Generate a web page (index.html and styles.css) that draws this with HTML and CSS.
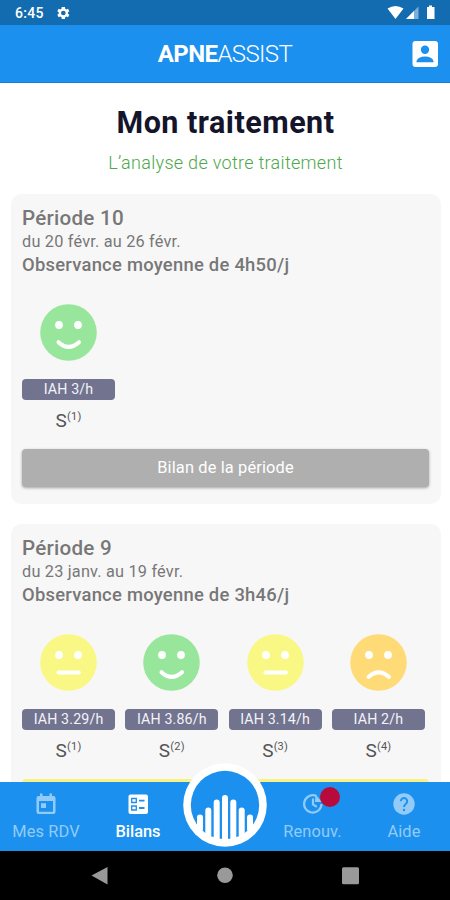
FILE: index.html
```html
<!DOCTYPE html>
<html lang="fr">
<head>
<meta charset="utf-8">
<title>ApneAssist</title>
<link rel="stylesheet" href="styles.css">
</head>
<body>
<svg class="defs" width="0" height="0">
  <symbol id="happy" viewBox="0 0 57 57"><circle cx="28.5" cy="28.5" r="28.3"/><g class="face"><circle cx="19" cy="21" r="3.9"/><circle cx="38" cy="21" r="3.9"/><path d="M18.5 38.2Q28.5 47.5 39 38.2"/></g></symbol>
  <symbol id="neutral" viewBox="0 0 57 57"><circle cx="28.5" cy="28.5" r="28.3"/><g class="face"><circle cx="19" cy="21" r="3.9"/><circle cx="38" cy="21" r="3.9"/><path d="M18.5 38.5H38.8"/></g></symbol>
  <symbol id="sad" viewBox="0 0 57 57"><circle cx="28.5" cy="28.5" r="28.3"/><g class="face"><circle cx="19" cy="21" r="3.9"/><circle cx="38" cy="21" r="3.9"/><path d="M18.5 43Q28.5 33.8 39 43"/></g></symbol>
</svg>
<div class="app">
  <div class="status">
    <span class="time">6:45</span>
    <svg class="gear" width="16" height="16" viewBox="0 0 24 24"><path fill="#fff" fill-rule="evenodd" d="M19.4 13c.1-.7.1-1.300 0-2l2.100-1.700-2-3.500-2.500 1c-.5-.4-1.100-.7-1.700-1L14.900 3h-4.800l-.4 2.800c-.6.300-1.200.6-1.700 1l-2.500-1-2 3.500L5.600 11c-.1.700-.1 1.300 0 2l-2.100 1.700 2 3.500 2.500-1c.5.400 1.100.7 1.700 1l.4 2.800h4.800l.4-2.800c.6-.3 1.200-.6 1.700-1l2.500 1 2-3.500zM12.500 15.500a3.500 3.500 0 1 1 0-7 3.500 3.500 0 0 1 0 7z"/></svg>
    <svg class="signals" width="50" height="16" viewBox="0 0 50 16"><path d="M0.500 3.500Q8.500-1.500 16.500 3.500L8.500 14z" fill="#fff"/><path d="M31.500 1.500V14H19z" fill="#7eb1d9"/><path d="M27 6V14H19z" fill="#fff"/><path d="M40 2H42V0.500H45V2H47.500V14H40z" fill="#fff"/></svg>
  </div>
  <header class="header">
    <div class="brand"><b>APNE</b>ASSIST</div>
    <svg class="account" width="26" height="26" viewBox="0 0 26 26"><rect x=".5" width="25.500" height="26" rx="3" fill="#fff"/><circle cx="13" cy="8.800" r="4.200" fill="#1b90ee"/><path d="M4.500 21.300V20Q6 15.500 13 15.500T21.500 20V21.300z" fill="#1b90ee"/></svg>
  </header>
  <main class="content">
    <h1>Mon traitement</h1>
    <p class="subtitle">L’analyse de votre traitement</p>
    <section class="card">
      <h2>Période 10</h2>
      <p class="dates">du 20 févr. au 26 févr.</p>
      <p class="usage">Observance moyenne de 4h50/j</p>
      <div class="weeks">
        <div class="week"><svg class="smiley green"><use href="#happy"/></svg><span class="pill">IAH 3/h</span><span class="label">S<sup>(1)</sup></span></div>
      </div>
      <div class="button grey">Bilan de la période</div>
    </section>
    <section class="card">
      <h2>Période 9</h2>
      <p class="dates">du 23 janv. au 19 févr.</p>
      <p class="usage">Observance moyenne de 3h46/j</p>
      <div class="weeks">
        <div class="week"><svg class="smiley yellow"><use href="#neutral"/></svg><span class="pill">IAH 3.29/h</span><span class="label">S<sup>(1)</sup></span></div>
        <div class="week"><svg class="smiley green"><use href="#happy"/></svg><span class="pill">IAH 3.86/h</span><span class="label">S<sup>(2)</sup></span></div>
        <div class="week"><svg class="smiley yellow"><use href="#neutral"/></svg><span class="pill">IAH 3.14/h</span><span class="label">S<sup>(3)</sup></span></div>
        <div class="week"><svg class="smiley orange"><use href="#sad"/></svg><span class="pill">IAH 2/h</span><span class="label">S<sup>(4)</sup></span></div>
      </div>
      <div class="button lemon"></div>
    </section>
  </main>
  <nav class="tabs">
    <div class="tab"><svg width="24" height="24" viewBox="0 0 24 24"><path fill="#93cbf8" fill-rule="evenodd" d="M6 1.500h2.500V4h7V1.500H18V4h1.500a2 2 0 0 1 2 2v14a2 2 0 0 1-2 2h-15a2 2 0 0 1-2-2V6a2 2 0 0 1 2-2H6zM5 9v10.700h14V9zM7 11.200h5V16H7z"/></svg><span>Mes RDV</span></div>
    <div class="tab active"><svg width="24" height="24" viewBox="0 0 24 24"><rect x="2.500" y="2.500" width="19.500" height="19.500" rx="2" fill="#fff"/><g fill="none" stroke="#1b90ee" stroke-width="1.300"><path d="M5.700 6.500h4.600v4H5.700zM5.700 14h4.600v4H5.700z"/><path stroke-width="1.800" d="M13 8.600h5.500M13 16h5.500"/></g></svg><span>Bilans</span></div>
    <div class="tab gap"></div>
    <div class="tab"><svg width="24" height="24" viewBox="0 0 24 24"><g fill="none" stroke="#93cbf8" stroke-width="2.200"><path d="M15.500 4A8.700 8.700 0 1 0 20.500 12"/><path d="M12 6.500V12.300L15.800 14.800"/></g><path fill="#93cbf8" d="M14.500 2.500L21 10H14z"/></svg><i class="badge"></i><span>Renouv.</span></div>
    <div class="tab"><svg width="24" height="24" viewBox="0 0 24 24"><circle cx="12" cy="12" r="10.700" fill="#93cbf8"/><path d="M8.800 9.200a3.200 3.200 0 1 1 5.200 2.500Q12 13.300 12 15" fill="none" stroke="#1b90ee" stroke-width="1.900"/><circle cx="12" cy="18" r="1.200" fill="#1b90ee"/></svg><span>Aide</span></div>
    <svg class="logo" width="84" height="84" viewBox="0 0 84 84"><circle cx="42" cy="42" r="41.800" fill="#fff"/><circle cx="42" cy="42" r="34.200" fill="#1b90ee"/><g stroke="#fff" stroke-width="6" stroke-linecap="round"><path d="M17 54.500V66M25.300 47.500V72M33.700 39.500V76M42 35V77M50.300 39.500V76M58.700 47.500V72M67 54.500V66"/></g></svg>
  </nav>
  <div class="system">
    <svg width="450" height="49" viewBox="0 0 450 49"><g fill="#999"><path d="M91.500 24.500L107.500 16V33.500z"/><circle cx="225" cy="24.300" r="7.800"/><rect x="342" y="16.300" width="17" height="17" rx="1.500"/></g></svg>
  </div>
</div>
</body>
</html>
```
FILE: styles.css
```css
* { box-sizing: border-box; }
body { margin: 0; font-family: Roboto, sans-serif; background: #fff; }
h1, h2, p { margin: 0; }
.defs { position: absolute; }
.app { width: 450px; height: 900px; display: flex; flex-direction: column; overflow: hidden; }
.status { height: 25px; flex: none; background: #146cb0; color: #fff; display: flex; align-items: center; padding: 1px 13px 0 15px; }
.time { font-size: 14px; font-weight: 500; letter-spacing: .3px; width: 40px; }
.signals { margin-left: auto; }
.header { height: 58px; flex: none; background: #1b90ee; border-bottom: 1px solid #1581da; display: flex; align-items: center; justify-content: center; padding-right: 12px; }
.brand { flex: 1; text-align: center; padding-left: 38px; color: #fff; font-size: 24px; font-weight: 300; letter-spacing: -.6px; }
.brand b { font-weight: 700; }
.content { flex: 1; min-height: 0; overflow: hidden; padding: 22px 9.500px 0 10.500px; }
h1 { text-align: center; font-size: 30.500px; line-height: 36px; font-weight: 700; color: #14142b; letter-spacing: .5px; }
.subtitle { text-align: center; font-size: 18px; line-height: 24px; font-weight: 300; color: #4ba84b; margin: 10px 0 19px; letter-spacing: .3px; }
.card { height: 310px; background: #f7f7f7; border-radius: 10px; margin-bottom: 20px; padding: 12px 11.500px 0; color: #777; }
h2 { font-size: 20.600px; line-height: 24px; font-weight: 500; letter-spacing: .25px; }
.dates { font-size: 16.300px; line-height: 23px; letter-spacing: .2px; }
.usage { font-size: 18.400px; line-height: 24px; font-weight: 500; letter-spacing: .25px; }
.weeks { display: grid; grid-template-columns: repeat(4, 93px); gap: 10.300px; margin-top: 27px; }
.week { display: flex; flex-direction: column; align-items: center; }
.smiley { width: 57px; height: 57px; }
.face { fill: #fff; }
.face path { fill: none; stroke: #fff; stroke-width: 4; stroke-linecap: round; }
.green { fill: #98e69b; }
.yellow { fill: #faf884; }
.orange { fill: #ffdb78; }
.pill { width: 93px; height: 21px; margin-top: 17.500px; border-radius: 4px; background: #71738f; color: #f4f4f8; font-size: 14.200px; line-height: 21px; text-align: center; letter-spacing: .15px; }
.label { font-size: 19px; line-height: 24px; height: 24px; margin-top: 9px; color: #555; letter-spacing: .2px; }
.label sup { font-size: 11px; line-height: 0; vertical-align: 7px; }
.button { height: 38px; margin-top: 16.500px; border-radius: 4px; text-align: center; font-size: 16.400px; line-height: 38px; letter-spacing: .14px; color: #fff; }
.grey { background: #afafaf; box-shadow: 0 1px 3px rgba(0, 0, 0, .35); }
.lemon { background: #faf184; }
.tabs { height: 69px; flex: none; position: relative; background: #1b90ee; display: grid; grid-template-columns: 92px 92px 83px 91px 92px; color: #93cbf8; }
.tab { position: relative; display: flex; flex-direction: column; align-items: center; padding-top: 10px; font-size: 16.400px; line-height: 24px; }
.tab span { margin-top: 4px; letter-spacing: .1px; }
.tab.active { color: #fff; font-weight: 500; }
.tab.active span { letter-spacing: 0; }
.badge { position: absolute; left: 53px; top: 5px; width: 20px; height: 20px; border-radius: 50%; background: #b90b3b; }
.logo { position: absolute; left: 183.300px; top: -19px; }
.system { height: 49px; flex: none; background: #000; }
```
